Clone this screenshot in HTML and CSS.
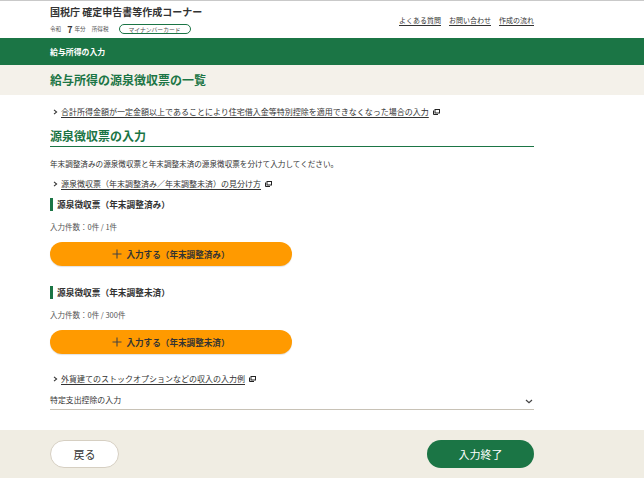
FILE: index.html
```html
<!DOCTYPE html>
<html lang="ja">
<head>
<meta charset="utf-8">
<title>給与所得の源泉徴収票の一覧</title>
<link rel="stylesheet" href="styles.css">
</head>
<body>
<header class="site-header">
  <div class="inner header-inner">
    <div class="brand">
      <div class="brand-title">国税庁 確定申告書等作成コーナー</div>
      <div class="brand-meta">
        <span class="meta-era">令和</span><span class="meta-year">7</span><span class="meta-unit">年分</span><span class="meta-tax">所得税</span><span class="pill">マイナンバーカード</span>
      </div>
    </div>
    <nav class="util-links">
      <a href="#">よくある質問</a>
      <a href="#">お問い合わせ</a>
      <a href="#">作成の流れ</a>
    </nav>
  </div>
</header>

<div class="step-bar">
  <div class="inner">給与所得の入力</div>
</div>

<div class="page-title">
  <div class="inner"><h1>給与所得の源泉徴収票の一覧</h1></div>
</div>

<main class="inner content">
  <p class="link-row first-link">
    <svg class="chev" width="5" height="6" viewBox="0 0 5 6"><polyline points="1,0.8 3.6,3 1,5.2" fill="none" stroke="#333" stroke-width="1.1"/></svg>
    <a href="#">合計所得金額が一定金額以上であることにより住宅借入金等特別控除を適用できなくなった場合の入力</a>
    <svg class="ext" width="7" height="6" viewBox="0 0 7 6"><rect x="2" y="0.5" width="4.5" height="3.5" fill="none" stroke="#222" stroke-width="1"/><path d="M0.5 1.5 V5.5 H5" fill="none" stroke="#222" stroke-width="1"/></svg>
  </p>

  <h2 class="section-head">源泉徴収票の入力</h2>

  <p class="lead">年末調整済みの源泉徴収票と年末調整未済の源泉徴収票を分けて入力してください。</p>

  <p class="link-row second-link">
    <svg class="chev" width="5" height="6" viewBox="0 0 5 6"><polyline points="1,0.8 3.6,3 1,5.2" fill="none" stroke="#333" stroke-width="1.1"/></svg>
    <a href="#">源泉徴収票（年末調整済み／年末調整未済）の見分け方</a>
    <svg class="ext" width="7" height="6" viewBox="0 0 7 6"><rect x="2" y="0.5" width="4.5" height="3.5" fill="none" stroke="#222" stroke-width="1"/><path d="M0.5 1.5 V5.5 H5" fill="none" stroke="#222" stroke-width="1"/></svg>
  </p>

  <section class="slip-group first-group">
    <h3 class="sub-head">源泉徴収票（年末調整済み）</h3>
    <p class="count">入力件数：0件 / 1件</p>
    <button class="add-btn" type="button">
      <svg width="10" height="10" viewBox="0 0 10 10"><path d="M5 0.5 V9.5 M0.5 5 H9.5" stroke="#444" stroke-width="1.1"/></svg>
      <span>入力する（年末調整済み）</span>
    </button>
  </section>

  <section class="slip-group second-group">
    <h3 class="sub-head">源泉徴収票（年末調整未済）</h3>
    <p class="count">入力件数：0件 / 300件</p>
    <button class="add-btn" type="button">
      <svg width="10" height="10" viewBox="0 0 10 10"><path d="M5 0.5 V9.5 M0.5 5 H9.5" stroke="#444" stroke-width="1.1"/></svg>
      <span>入力する（年末調整未済）</span>
    </button>
  </section>

  <p class="link-row third-link">
    <svg class="chev" width="5" height="6" viewBox="0 0 5 6"><polyline points="1,0.8 3.6,3 1,5.2" fill="none" stroke="#333" stroke-width="1.1"/></svg>
    <a href="#">外貨建てのストックオプションなどの収入の入力例</a>
    <svg class="ext" width="7" height="6" viewBox="0 0 7 6"><rect x="2" y="0.5" width="4.5" height="3.5" fill="none" stroke="#222" stroke-width="1"/><path d="M0.5 1.5 V5.5 H5" fill="none" stroke="#222" stroke-width="1"/></svg>
  </p>

  <div class="accordion">
    <span>特定支出控除の入力</span>
    <svg width="8" height="5" viewBox="0 0 8 5"><polyline points="1,1 4,3.8 7,1" fill="none" stroke="#444" stroke-width="1.2"/></svg>
  </div>
</main>

<footer class="action-bar">
  <div class="inner action-inner">
    <button class="back-btn" type="button">戻る</button>
    <button class="done-btn" type="button">入力終了</button>
  </div>
</footer>
</body>
</html>
```

FILE: styles.css
```css
html, body {
  margin: 0;
  padding: 0;
  background: #ffffff;
}

body {
  font-family: "Noto Sans CJK JP", "Noto Sans", sans-serif;
  color: #333333;
  width: 644px;
  height: 496px;
  overflow: hidden;
}

.inner {
  width: 484px;
  margin-left: 50px;
}

p, h1, h2, h3 {
  margin: 0;
}

/* header */
.site-header {
  border-top: 1px solid #c9c9c9;
  height: 37px;
}

.header-inner {
  display: flex;
  justify-content: space-between;
  align-items: flex-start;
  height: 37px;
}

.brand {
  padding-top: 4px;
}

.brand-title {
  font-size: 10px;
  line-height: 14px;
  font-weight: 700;
  color: #333;
  white-space: nowrap;
}

.brand-meta {
  display: flex;
  align-items: center;
  margin-top: 5px;
  height: 10px;
  font-size: 5.6px;
  color: #555;
  white-space: nowrap;
}

.meta-era {
  margin-right: 6px;
}

.meta-year {
  font-size: 9px;
  font-weight: 700;
  color: #333;
  margin-right: 2px;
}

.meta-unit {
  margin-right: 6px;
}

.meta-tax {
  margin-right: 10px;
}

.pill {
  display: inline-flex;
  align-items: center;
  justify-content: center;
  box-sizing: border-box;
  width: 72px;
  height: 10px;
  border: 1px solid #1b7545;
  border-radius: 6px;
  font-size: 5.8px;
  color: #555;
}

.util-links {
  display: flex;
  gap: 8px;
  align-self: center;
  padding-top: 1px;
}

.util-links a {
  font-size: 7px;
  line-height: 10px;
  color: #333;
  text-decoration: underline;
  text-underline-offset: 1.5px;
  white-space: nowrap;
}

/* step bar */
.step-bar {
  background: #1b7545;
  height: 27px;
  display: flex;
  align-items: center;
}

.step-bar .inner {
  font-size: 7.9px;
  font-weight: 700;
  color: #ffffff;
  line-height: 12px;
}

/* page title */
.page-title {
  background: #f4f1ea;
  height: 30px;
  display: flex;
  align-items: center;
}

.page-title h1 {
  font-size: 12px;
  line-height: 16px;
  font-weight: 700;
  color: #1b7545;
}

/* content */
.content {
  display: flex;
  flex-direction: column;
}

.link-row {
  display: flex;
  align-items: center;
  font-size: 8px;
  line-height: 14px;
  padding-left: 3px;
}

.link-row .chev {
  margin-right: 3px;
  flex: none;
}

.link-row a {
  color: #333;
  text-decoration: underline;
  text-underline-offset: 1.5px;
  white-space: nowrap;
}

.link-row .ext {
  margin-left: 4px;
  flex: none;
}

.first-link {
  margin-top: 10px;
}

.section-head {
  margin-top: 9px;
  font-size: 12px;
  line-height: 16px;
  font-weight: 700;
  color: #1b7545;
  padding-bottom: 2px;
  border-bottom: 1.2px solid #1b7545;
}

.lead {
  margin-top: 11px;
  font-size: 7.6px;
  line-height: 12px;
  color: #333;
  white-space: nowrap;
}

.second-link {
  margin-top: 7px;
}

.slip-group {
  display: flex;
  flex-direction: column;
}

.first-group {
  margin-top: 7px;
}

.second-group {
  margin-top: 20px;
}

.sub-head {
  font-size: 8.7px;
  line-height: 13px;
  font-weight: 700;
  color: #333;
  border-left: 3.5px solid #1b7545;
  padding-left: 4px;
}

.count {
  margin-top: 10px;
  font-size: 7.5px;
  line-height: 12px;
  color: #555;
}

.add-btn {
  margin-top: 9px;
  width: 242px;
  height: 24px;
  border: none;
  border-radius: 12px;
  background: #ff9a00;
  box-shadow: 0 1px 1px rgba(0, 0, 0, 0.12);
  display: flex;
  align-items: center;
  justify-content: center;
  gap: 4px;
  padding: 0;
  font-family: inherit;
  font-size: 8.6px;
  font-weight: 700;
  color: #333;
}

.third-link {
  margin-top: 18px;
}

.accordion {
  margin-top: 7px;
  display: flex;
  justify-content: space-between;
  align-items: center;
  font-size: 7.9px;
  line-height: 14px;
  color: #333;
  padding-bottom: 2px;
  border-bottom: 1px solid #c8c2b6;
}

.accordion svg {
  margin-right: 1px;
  margin-top: 3px;
}

/* footer */
.action-bar {
  margin-top: 20px;
  background: #f0ede3;
  height: 48px;
  display: flex;
  align-items: center;
}

.action-inner {
  display: flex;
  justify-content: space-between;
  align-items: center;
}

.back-btn,
.done-btn {
  height: 28px;
  border-radius: 14px;
  font-family: inherit;
  font-size: 11px;
  padding: 0;
  display: flex;
  align-items: center;
  justify-content: center;
}

.back-btn {
  width: 69px;
  background: #ffffff;
  border: 1px solid #d6cfc2;
  color: #333;
}

.done-btn {
  width: 107px;
  background: #1b7545;
  border: none;
  color: #ffffff;
}
```
